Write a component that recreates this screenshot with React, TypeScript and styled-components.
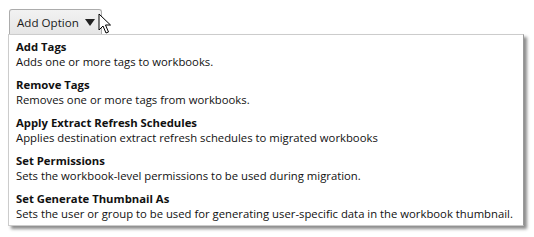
import React from "react";
import styled, { createGlobalStyle } from "styled-components";

const GlobalStyle = createGlobalStyle`
  body {
    margin: 0;
    background: #ffffff;
    font-family: "Open Sans", "Noto Sans", sans-serif;
  }
`;

const Page = styled.div`
  position: relative;
  width: 534px;
  height: 237px;
  padding: 9px 0 0 8px;
  box-sizing: border-box;
`;

const DropButton = styled.button`
  display: flex;
  align-items: center;
  gap: 6px;
  height: 25px;
  margin-left: 1px;
  padding: 0 6px 0 7px;
  border: 1px solid #acacac;
  border-bottom: none;
  border-radius: 3px 3px 0 0;
  background: linear-gradient(#f2f2f2, #e6e6e6);
  font-family: inherit;
  font-size: 11.6px;
  color: #1a1a1a;
`;

const Caret = styled.span`
  width: 0;
  height: 0;
  border-left: 5px solid transparent;
  border-right: 5px solid transparent;
  border-top: 7px solid #222;
`;

const Menu = styled.ul`
  list-style: none;
  margin: 0;
  width: 516px;
  padding: 4px 0 4px;
  box-sizing: border-box;
  background: #ffffff;
  border: 1px solid #cccccc;
  border-right-color: #9a9a9a;
  box-shadow: 3px 3px 3px rgba(0, 0, 0, 0.45);
  display: flex;
  flex-direction: column;
  gap: 8px;
`;

const Item = styled.li`
  padding: 0 7px;
  font-size: 11.3px;
  line-height: 15px;
  color: #111;
  white-space: nowrap;
`;

const Title = styled.div`
  font-weight: 700;
  height: 15px;
`;

const Desc = styled.div`
  height: 15px;
`;

const Cursor = styled.svg`
  position: absolute;
  left: 98px;
  top: 13px;
`;

const options = [
  { title: "Add Tags", desc: "Adds one or more tags to workbooks." },
  { title: "Remove Tags", desc: "Removes one or more tags from workbooks." },
  {
    title: "Apply Extract Refresh Schedules",
    desc: "Applies destination extract refresh schedules to migrated workbooks",
  },
  {
    title: "Set Permissions",
    desc: "Sets the workbook-level permissions to be used during migration.",
  },
  {
    title: "Set Generate Thumbnail As",
    desc: "Sets the user or group to be used for generating user-specific data in the workbook thumbnail.",
  },
];

const App = () => {
  return (
    <Page>
      <GlobalStyle />
      <DropButton>
        Add Option
        <Caret />
      </DropButton>
      <Menu>
        {options.map((o) => (
          <Item key={o.title}>
            <Title>{o.title}</Title>
            <Desc>{o.desc}</Desc>
          </Item>
        ))}
      </Menu>
      <Cursor width="14" height="22" viewBox="0 0 14 22">
        <path
          d="M1 1 L1 17 L5 13 L8 20 L10.5 19 L7.5 12 L12.5 12 Z"
          fill="#fff"
          stroke="#000"
          strokeWidth="1"
          strokeLinejoin="miter"
        />
      </Cursor>
    </Page>
  );
};

export default App;
